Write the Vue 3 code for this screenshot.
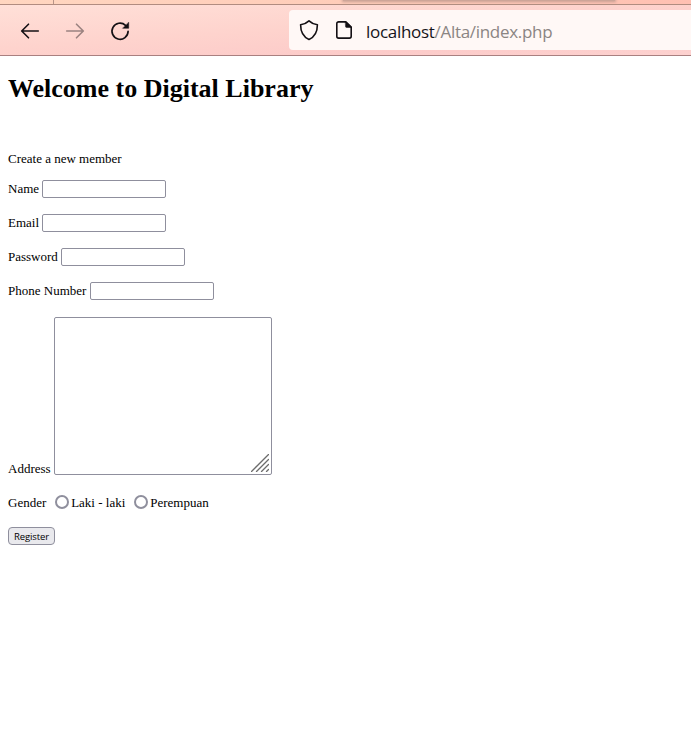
<script setup>
const fields = [
  { id: 'name', label: 'Name', type: 'text' },
  { id: 'email', label: 'Email', type: 'text' },
  { id: 'password', label: 'Password', type: 'password' },
  { id: 'phone', label: 'Phone Number', type: 'text' },
]
const genders = ['Laki - laki', 'Perempuan']
</script>

<template>
  <div class="window">
    <header class="browser">
      <div class="tabs">
        <span class="tab-edge"></span>
        <span class="active-tab"></span>
      </div>
      <nav class="toolbar">
        <svg class="icon back" viewBox="0 0 20 20">
          <path d="M18.300 10H2M8.500 3.200 1.700 10l6.800 6.800" />
        </svg>
        <svg class="icon forward" viewBox="0 0 20 20">
          <path d="M1.700 10H18M11.500 3.200 18.300 10l-6.800 6.800" />
        </svg>
        <svg class="icon reload" viewBox="0 0 20 20">
          <path d="M18.100 10.300A8.050 8.050 0 1 1 15.500 4.300" />
          <path class="solid" d="M18.700 1.500v5.800h-5.800Z" />
        </svg>
        <div class="address">
          <svg class="shield" viewBox="0 0 20 22">
            <path d="M10 1.800C8 3.700 5 5.200 1.600 5.800 1.600 13 3.600 17.700 10 20.500c6.400-2.800 8.400-7.500 8.400-14.700C15 5.200 12 3.700 10 1.800Z" />
          </svg>
          <svg class="page" viewBox="0 0 18 20">
            <path d="M10.800 1.900H3.600A1.800 1.800 0 0 0 1.800 3.700v12.600a1.800 1.800 0 0 0 1.800 1.800h10.800a1.800 1.800 0 0 0 1.800-1.800V7.100Z" />
            <path class="solid" d="M10.500 1.700h.6L16.300 6.900V7.500H11.500a1 1 0 0 1-1-1Z" />
          </svg>
          <span class="url"><span class="host">localhost</span>/Alta/index.php</span>
        </div>
      </nav>
    </header>

    <main>
      <h1>Welcome to Digital Library</h1>
      <p class="intro">Create a new member</p>
      <form @submit.prevent>
        <div v-for="f in fields" :key="f.id" class="row">
          <label :for="f.id">{{ f.label }}</label>
          <input :id="f.id" class="field" :type="f.type" />
        </div>
        <div class="row area-row">
          <label for="address">Address</label>
          <div class="area">
            <textarea id="address"></textarea>
            <svg class="grip" viewBox="0 0 18 18">
              <path d="M.5 17.500 17.500.500M5.500 17.500 17.500 5.500M10.500 17.500 17.500 10.500M15.500 17.500l2-2" />
            </svg>
          </div>
        </div>
        <div class="row genders">
          <span class="caption">Gender</span>
          <span v-for="g in genders" :key="g" class="option">
            <input :id="g" type="radio" name="gender" /><label :for="g">{{ g }}</label>
          </span>
        </div>
        <button type="submit">Register</button>
      </form>
    </main>
  </div>
</template>

<style>
body { background: #fff; overflow: hidden; }
</style>

<style scoped>
* { box-sizing: border-box; }
.window { height: 746px; background: #fff; color: #000; overflow: hidden; }
.browser { height: 56px; border-bottom: 1px solid #a98080; }
.tabs {
  display: flex;
  height: 5px;
  background: linear-gradient(90deg, #ffd6c0, #ffcbb8 60%, #ffc0b2);
  border-bottom: 1px solid #b18c80;
}
.tab-edge { width: 54px; border-right: 1px solid #b89488; }
.active-tab {
  width: 272px;
  height: 1px;
  margin-left: 289px;
  background: #cda598;
  box-shadow: 0 0 3px 1px #c49c90;
}
.toolbar {
  display: flex;
  align-items: center;
  height: 50px;
  padding-left: 20px;
  background: linear-gradient(176deg, #ffe0d8 0%, #fed3cd 45%, #fccbc9 75%, #fdd2d0 100%);
}
.icon { width: 20px; height: 20px; margin-top: 1px; flex: none; }
svg { display: block; fill: none; stroke: #141014; stroke-width: 1.6; stroke-linecap: round; stroke-linejoin: round; }
.solid { fill: #141014; stroke-width: .5; }
.forward { margin-left: 25px; opacity: .42; }
.reload { margin-left: 25px; margin-top: 2px; stroke-width: 1.7; }
.address {
  display: flex;
  align-items: center;
  flex: 1;
  height: 40px;
  margin-left: 159px;
  padding-left: 10px;
  border-radius: 4px 0 0 4px;
  background: #fff8f6;
}
.shield { width: 20px; height: 22px; }
.page { width: 18px; height: 20px; margin-left: 16px; }
.url {
  margin: 3px 0 0 13px;
  font: 17px/24px "Open Sans", sans-serif;
  letter-spacing: -.3px;
  color: #8b8583;
  white-space: nowrap;
}
.host { color: #15141a; }
main { padding: 18px 8px 0; font: 13px/15px "Liberation Serif", serif; }
h1 { margin: 0; font-size: 26px; line-height: 30px; }
.intro { margin: 47px 0 14px; }
form { display: flex; flex-direction: column; align-items: flex-start; gap: 16px; }
.row { display: flex; align-items: center; gap: 3.4px; height: 18px; white-space: nowrap; }
.row label, .caption { padding-bottom: 2px; }
.field {
  width: 124px;
  height: 18px;
  margin: 0;
  padding: 1px 2px;
  border: 1px solid #8f8f9d;
  border-radius: 2px;
  background: #fff;
}
.area-row { height: 158px; margin-top: 1px; align-items: flex-end; }
.area-row label { margin-bottom: -3px; }
.area { position: relative; width: 218px; height: 158px; }
textarea {
  display: block;
  width: 100%;
  height: 100%;
  margin: 0;
  border: 1px solid #8f8f9d;
  border-radius: 2px;
  resize: none;
  background: #fff;
}
.grip { position: absolute; right: 3px; bottom: 3px; width: 18px; height: 18px; stroke: #6c6c6c; stroke-width: 1.3; }
.genders { gap: 8.500px; margin-top: 2px; }
.genders label, .caption { padding-bottom: 0; }
.option { display: flex; align-items: center; gap: 2.400px; }
.option input {
  appearance: none;
  width: 14px;
  height: 14px;
  margin: 0;
  border: 2px solid #8f8f9d;
  border-radius: 50%;
  background: #fff;
}
button {
  width: 47px;
  height: 18px;
  padding: 1px 0 0;
  border: 1px solid #8f8f9d;
  border-radius: 4px;
  background: #e9e9ed;
  color: #000;
  font: 9.5px/15px "Open Sans", sans-serif;
  letter-spacing: -.1px;
}
</style>
